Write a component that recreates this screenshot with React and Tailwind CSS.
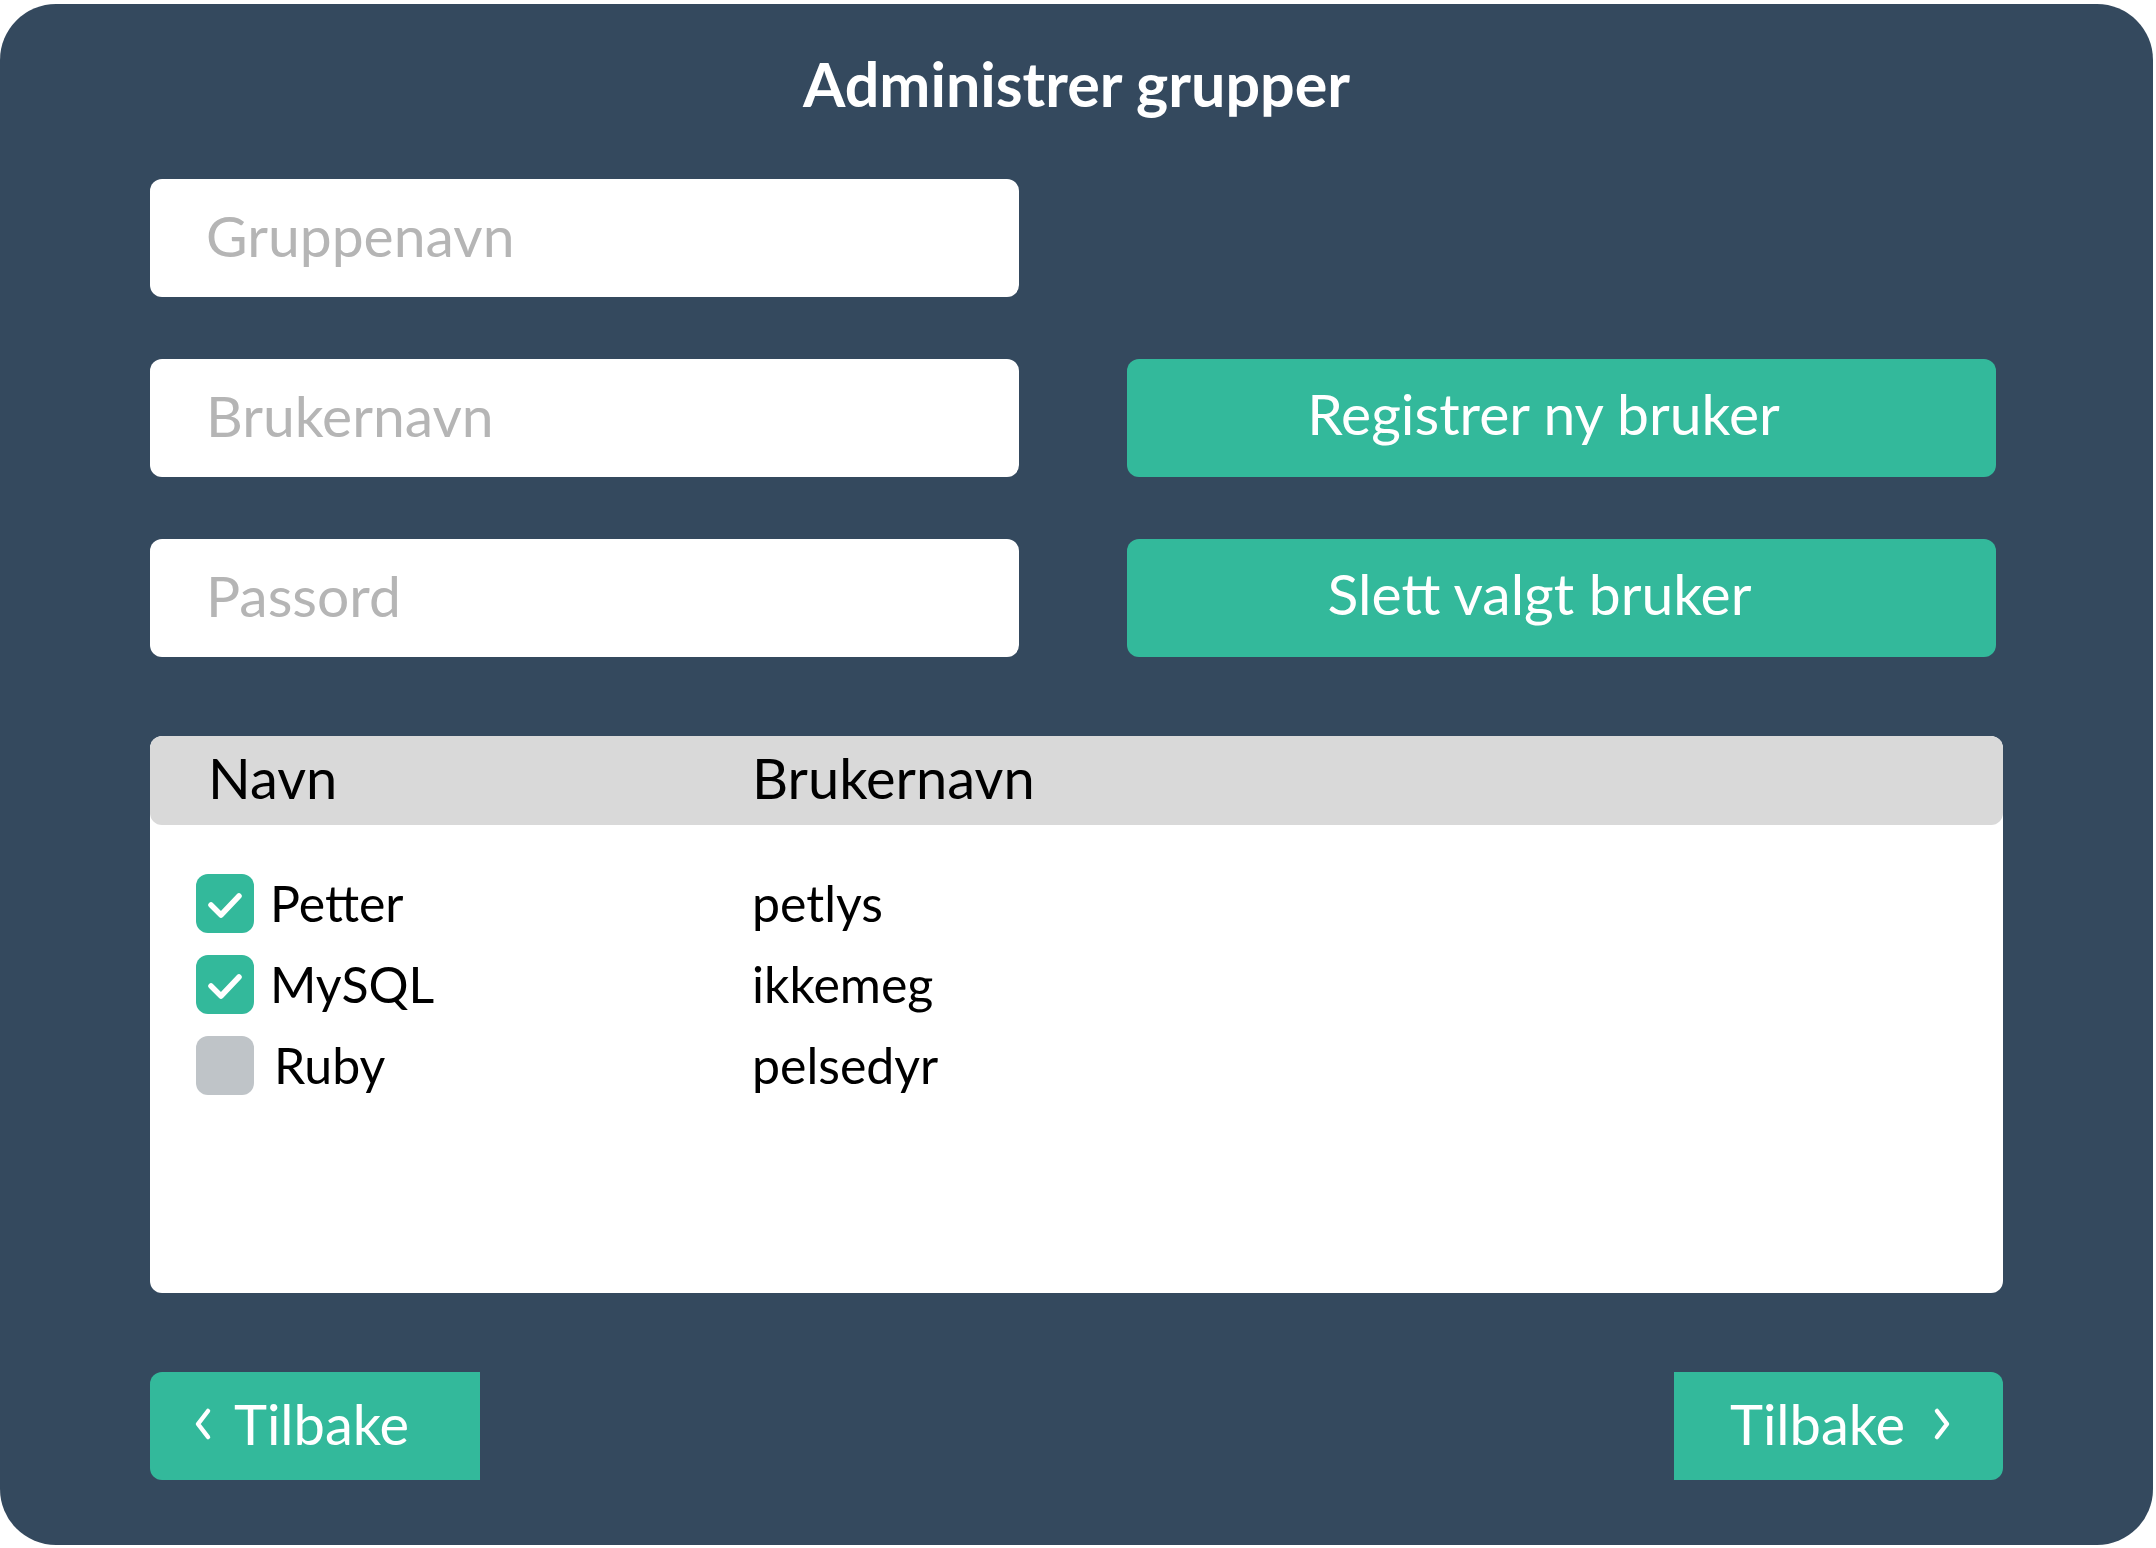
const users = [
  { name: "Petter", username: "petlys", checked: true },
  { name: "MySQL", username: "ikkemeg", checked: true },
  { name: "Ruby", username: "pelsedyr", checked: false },
];

const Chevron = ({ dir }) => (
  <svg width="18" height="34" viewBox="0 0 18 34" fill="none">
    <path
      d={dir === "left" ? "M14 4 L4 17 L14 30" : "M4 4 L14 17 L4 30"}
      stroke="white"
      strokeWidth="4.5"
      strokeLinecap="round"
      strokeLinejoin="round"
    />
  </svg>
);

const Checkbox = ({ checked }) => (
  <div
    className={`w-[58px] h-[59px] rounded-[12px] flex items-center justify-center ${
      checked ? "bg-[#33b99b]" : "bg-[#bfc4c8]"
    }`}
  >
    {checked && (
      <svg width="38" height="30" viewBox="0 0 38 30" fill="none" className="mt-[4px]">
        <path
          d="M5 14 L15 24 L33 5"
          stroke="white"
          strokeWidth="5.5"
          strokeLinecap="round"
          strokeLinejoin="round"
        />
      </svg>
    )}
  </div>
);

export default function App() {
  return (
    <div className="bg-white w-[2156px] h-[1548px] pt-[4px] font-['Lato',sans-serif]">
      <div className="w-[2153px] h-[1541px] bg-[#34495e] rounded-[56px] px-[150px] flex flex-col">
        <h1 className="mt-[48px] leading-[64px] text-[61px] font-bold text-white text-center">
          Administrer grupper
        </h1>

        {/* form fields + actions */}
        <div className="mt-[63px] grid grid-cols-[869px_869px] gap-x-[108px] gap-y-[62px]">
          <input
            placeholder="Gruppenavn"
            className="h-[118px] rounded-[12px] bg-white px-[56px] pb-[6px] text-[57px] outline-none placeholder:text-[#b5b5b5]"
          />
          <div />
          <input
            placeholder="Brukernavn"
            className="h-[118px] rounded-[12px] bg-white px-[56px] pb-[6px] text-[57px] outline-none placeholder:text-[#b5b5b5]"
          />
          <button className="h-[118px] rounded-[12px] bg-[#33b99b] text-white text-[57px] pr-[36px] pb-[8px]">
            Registrer ny bruker
          </button>
          <input
            placeholder="Passord"
            type="password"
            className="h-[118px] rounded-[12px] bg-white px-[56px] pb-[6px] text-[57px] outline-none placeholder:text-[#b5b5b5]"
          />
          <button className="h-[118px] rounded-[12px] bg-[#33b99b] text-white text-[57px] pr-[44px] pb-[8px]">
            Slett valgt bruker
          </button>
        </div>

        {/* user table */}
        <div className="mt-[79px] h-[557px] bg-white rounded-[12px] overflow-hidden">
          <div className="h-[89px] bg-[#d9d9d9] rounded-[12px] flex items-center pb-[6px] text-[56px] text-black">
            <span className="pl-[58px] w-[602px]">Navn</span>
            <span>Brukernavn</span>
          </div>
          <div className="pt-[38px]">
            {users.map((u) => (
              <div key={u.name} className="h-[81px] flex items-center text-[50px] text-black">
                <div className="w-[602px] pl-[46px] flex items-center gap-[16px]">
                  <Checkbox checked={u.checked} />
                  <span className={u.checked ? "" : "pl-[4px]"}>{u.name}</span>
                </div>
                <span>{u.username}</span>
              </div>
            ))}
          </div>
        </div>

        {/* navigation */}
        <div className="mt-[79px] flex justify-between">
          <button className="w-[330px] h-[108px] bg-[#33b99b] rounded-l-[12px] text-white text-[56px] flex items-center pl-[44px] pb-[4px] gap-[22px]">
            <Chevron dir="left" />
            Tilbake
          </button>
          <button className="w-[329px] h-[108px] bg-[#33b99b] rounded-r-[12px] text-white text-[56px] flex items-center pl-[56px] pb-[4px] gap-[28px]">
            Tilbake
            <Chevron dir="right" />
          </button>
        </div>
      </div>
    </div>
  );
}
